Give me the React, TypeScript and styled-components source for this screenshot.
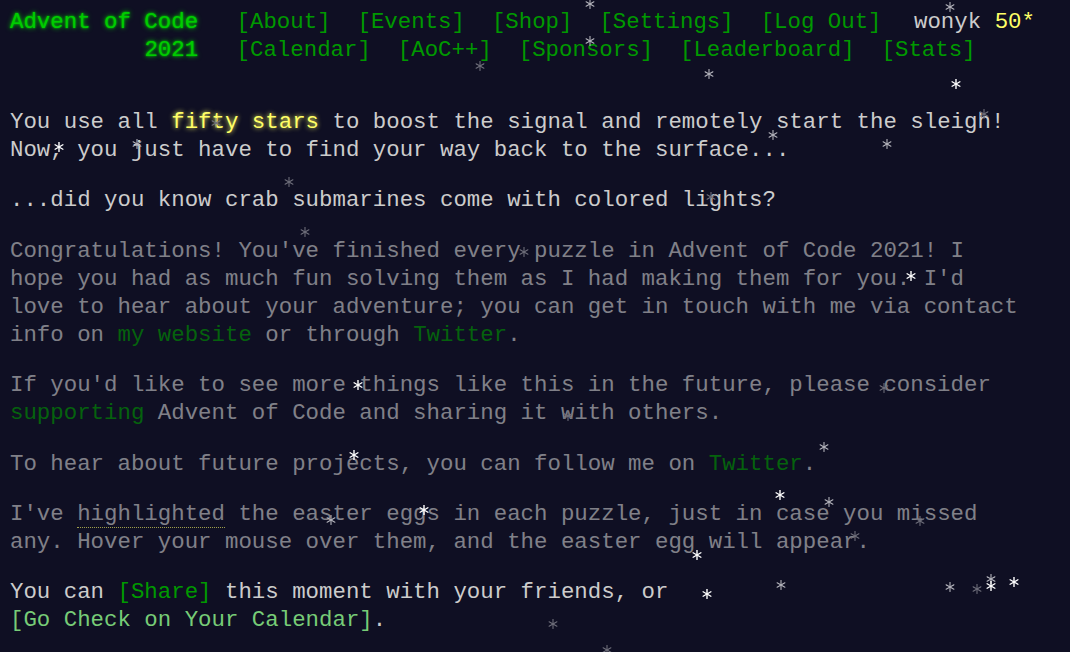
import React from 'react';
import styled, { createGlobalStyle } from 'styled-components';

// tone: 1 bright, 2 mid, 3 dim
const stars: [number, number, number][] = [
  [590, 4, 2], [950, 7, 2], [590, 41, 2], [480, 66, 3], [709, 74, 2], [956, 84, 1],
  [984, 114, 3], [216, 123, 3], [773, 135, 2], [887, 144, 2], [59, 147, 1], [137, 144, 2],
  [289, 182, 3], [711, 197, 3], [305, 232, 3], [524, 252, 3], [911, 276, 1], [358, 385, 1],
  [884, 388, 3], [568, 416, 3], [824, 447, 2], [354, 455, 1], [780, 495, 1], [829, 502, 2],
  [424, 510, 1], [331, 520, 2], [920, 521, 3], [855, 536, 3], [697, 555, 1], [707, 594, 1],
  [781, 585, 2], [950, 587, 2], [977, 589, 3], [991, 579, 2], [991, 586, 1], [1014, 582, 1],
  [553, 624, 3], [607, 650, 3],
];

const topNav = ['[About]', '[Events]', '[Shop]', '[Settings]', '[Log Out]'];
const eventNav = ['[Calendar]', '[AoC++]', '[Sponsors]', '[Leaderboard]', '[Stats]'];

const Star = ({ x, y, tone }: { x: number; y: number; tone: number }) => (
  <StarIcon $tone={tone} viewBox="-5 -5 10 10" style={{ left: x - 5, top: y - 5 }}>
    <line x1="0" y1="-4.5" x2="0" y2="4.5" />
    <line x1="-3.9" y1="-2.25" x2="3.9" y2="2.25" />
    <line x1="-3.9" y1="2.25" x2="3.9" y2="-2.25" />
  </StarIcon>
);

const App = () => {
  return (
    <Page>
      <GlobalStyle />
      <Header>
        <Title>Advent of Code</Title>
        <Nav>
          {topNav.map((item) => (
            <NavLink key={item}>{item}</NavLink>
          ))}
          <User>
            wonyk <StarCount>50*</StarCount>
          </User>
        </Nav>
        <Title>2021</Title>
        <Nav>
          {eventNav.map((item) => (
            <NavLink key={item}>{item}</NavLink>
          ))}
        </Nav>
      </Header>
      <Article>
        <P>
          You use all <Glow>fifty stars</Glow> to boost the signal and remotely start the sleigh! Now, you
          just have to find your way back to the surface...
        </P>
        <P>...did you know crab submarines come with colored lights?</P>
        <P $dim>
          Congratulations! You've finished every puzzle in Advent of Code 2021! I hope you had as much fun
          solving them as I had making them for you. I'd love to hear about your adventure; you can get in
          touch with me via contact info on <Link>my website</Link> or through <Link>Twitter</Link>.
        </P>
        <P $dim>
          If you'd like to see more things like this in the future, please consider <Link>supporting</Link>{' '}
          Advent of Code and sharing it with others.
        </P>
        <P $dim>
          To hear about future projects, you can follow me on <Link>Twitter</Link>.
        </P>
        <P $dim>
          I've <Egg>highlighted</Egg> the easter eggs in each puzzle, just in case you missed any. Hover your
          mouse over them, and the easter egg will appear.
        </P>
        <P>
          You can <Link>[Share]</Link> this moment with your friends, or{' '}
          <CalendarLink>[Go Check on Your Calendar]</CalendarLink>.
        </P>
      </Article>
      <Sky>
        {stars.map(([x, y, tone], idx) => (
          <Star key={idx} x={x} y={y} tone={tone} />
        ))}
      </Sky>
    </Page>
  );
};

const GlobalStyle = createGlobalStyle`
  html, body {
    margin: 0;
    padding: 0;
    background: #0f0f23;
    overflow: hidden;
  }

  body {
    font-family: "Liberation Mono", "DejaVu Sans Mono", monospace;
    font-size: 22.4px;
    line-height: 28px;
    color: #cccccc;
  }
`;

const Page = styled.div`
  position: relative;
  box-sizing: border-box;
  min-height: 100vh;
  padding: 8px 10px 0;
`;

const Header = styled.header`
  display: grid;
  grid-template-columns: max-content 1fr;
  white-space: nowrap;
  margin-bottom: 44px;
`;

const Title = styled.h1`
  justify-self: end;
  margin: 0;
  padding-right: 25px;
  font-size: 1em;
  font-weight: normal;
  color: #00cc00;
  text-shadow: 0 0 2px #00cc00, 0 0 5px #00cc00;
`;

const Nav = styled.nav`
  display: flex;
  align-items: baseline;
`;

const NavLink = styled.a`
  padding: 0 0.6em;
  color: #009900;
  cursor: pointer;
`;

const User = styled.div`
  margin-left: 19px;
  color: #cccccc;
`;

const StarCount = styled.span`
  color: #ffff66;
`;

const Article = styled.article`
  width: 1012px;
`;

const P = styled.p<{ $dim?: boolean }>`
  margin: 22.4px 0;
  opacity: ${(p) => (p.$dim ? 0.6 : 1)};
`;

const Glow = styled.em`
  font-style: normal;
  color: #ffff66;
  text-shadow: 0 0 5px #ffff66;
`;

const Link = styled.a`
  color: #009900;
  cursor: pointer;
`;

const CalendarLink = styled.a`
  color: #77cc77;
  white-space: nowrap;
  cursor: pointer;
`;

const Egg = styled.span`
  border-bottom: 1px dotted #ffff66;
`;

const Sky = styled.div`
  position: fixed;
  inset: 0;
  pointer-events: none;
`;

const StarIcon = styled.svg<{ $tone: number }>`
  position: absolute;
  width: 10px;
  height: 10px;
  stroke: ${(p) => (p.$tone === 1 ? '#ffffff' : p.$tone === 2 ? '#b4b4bc' : '#6e6e7a')};
  stroke-width: ${(p) => (p.$tone === 1 ? 1.4 : 1.1)};
  stroke-linecap: round;
`;

export default App;
